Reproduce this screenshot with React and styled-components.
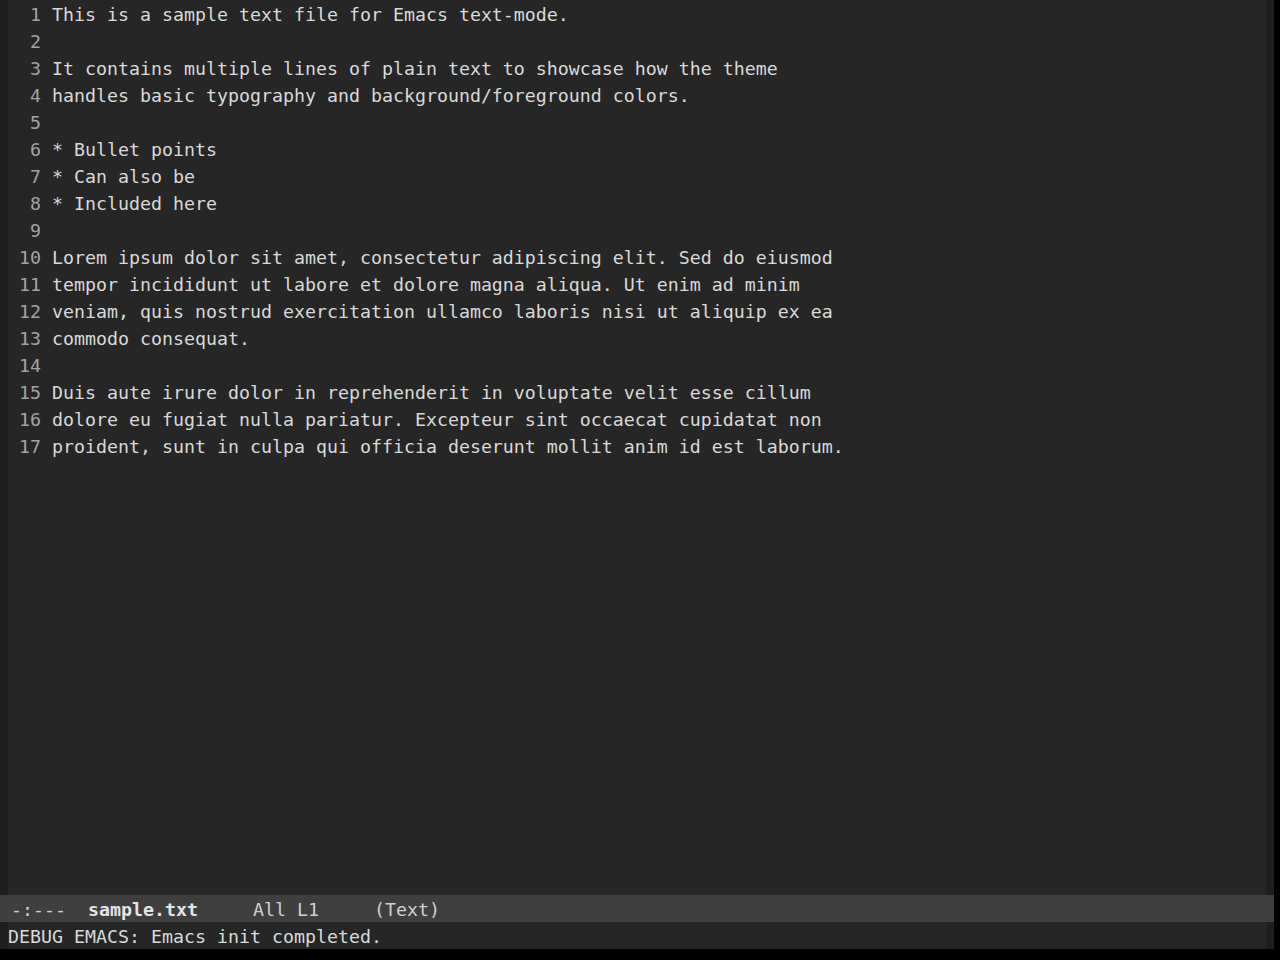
import React from 'react';
import styled, { createGlobalStyle } from 'styled-components';

const GlobalStyle = createGlobalStyle`
  html, body {
    margin: 0;
    padding: 0;
    background: #000000;
  }
  body {
    font-family: "DejaVu Sans Mono", "Liberation Mono", monospace;
  }
`;

const Frame = styled.div`
  width: 1274px;
  height: 949px;
  display: flex;
  flex-direction: column;
  background: #262626;
  color: #d6d6d6;
  font-family: "DejaVu Sans Mono", "Liberation Mono", monospace;
  font-size: 18.27px;
  line-height: 27px;
`;

const Window = styled.div`
  flex: 1;
  display: flex;
  min-height: 0;
`;

const Fringe = styled.div`
  width: 8px;
  flex: none;
  background: #1e1e1e;
`;

const TextArea = styled.div`
  flex: 1;
  display: flex;
  flex-direction: column;
  overflow: hidden;
`;

/* rows are 27px apart; glyphs sit 1px lower than a centred line box */
const Line = styled.div`
  display: flex;
  height: 26px;
  padding-top: 1px;
  white-space: pre;
`;

const LineNumber = styled.span`
  width: 33px;
  padding-right: 11px;
  flex: none;
  text-align: right;
  color: #a3a3a3;
`;

const LineText = styled.span`
  color: #d9d9d9;
`;

const ModeLine = styled.div`
  height: 26px;
  padding-top: 1px;
  flex: none;
  background: #3f3f3f;
  color: #d0d0d0;
  padding-left: 11px;
  white-space: pre;
  overflow: hidden;
`;

const Bold = styled.span`
  font-weight: bold;
  color: #e4e4e4;
`;

const EchoArea = styled.div`
  height: 27px;
  flex: none;
  display: flex;
`;

const EchoText = styled.div`
  flex: 1;
  padding-top: 1px;
  white-space: pre;
  color: #d9d9d9;
`;

const lines = [
  'This is a sample text file for Emacs text-mode.',
  '',
  'It contains multiple lines of plain text to showcase how the theme',
  'handles basic typography and background/foreground colors.',
  '',
  '* Bullet points',
  '* Can also be',
  '* Included here',
  '',
  'Lorem ipsum dolor sit amet, consectetur adipiscing elit. Sed do eiusmod',
  'tempor incididunt ut labore et dolore magna aliqua. Ut enim ad minim',
  'veniam, quis nostrud exercitation ullamco laboris nisi ut aliquip ex ea',
  'commodo consequat.',
  '',
  'Duis aute irure dolor in reprehenderit in voluptate velit esse cillum',
  'dolore eu fugiat nulla pariatur. Excepteur sint occaecat cupidatat non',
  'proident, sunt in culpa qui officia deserunt mollit anim id est laborum.',
];

const App = () => (
  <>
    <GlobalStyle />
    <Frame>
      <Window>
        <Fringe />
        <TextArea>
          {lines.map((text, i) => (
            <Line key={i}>
              <LineNumber>{i + 1}</LineNumber>
              <LineText>{text}</LineText>
            </Line>
          ))}
        </TextArea>
        <Fringe />
      </Window>
      <ModeLine>
        {'-:---  '}
        <Bold>sample.txt</Bold>
        {'     All L1     (Text)'}
      </ModeLine>
      <EchoArea>
        <Fringe />
        <EchoText>DEBUG EMACS: Emacs init completed.</EchoText>
        <Fringe />
      </EchoArea>
    </Frame>
  </>
);

export default App;
